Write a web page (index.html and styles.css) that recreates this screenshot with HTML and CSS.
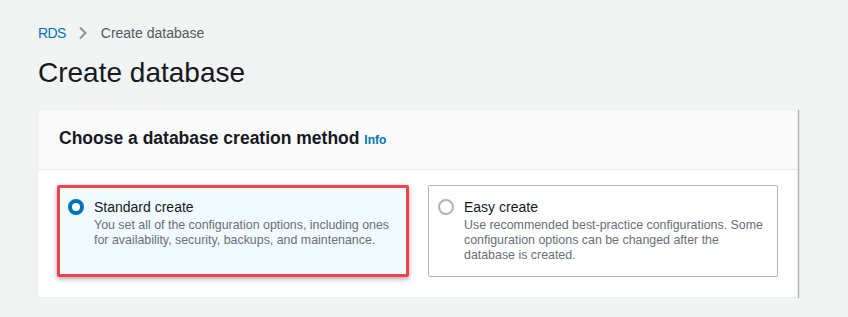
FILE: index.html
```html
<!DOCTYPE html>
<html lang="en">
<head>
    <meta charset="UTF-8">
    <title>Create database</title>
    <link rel="stylesheet" href="styles.css">
</head>
<body>
    <nav class="breadcrumbs">
        <a href="#" class="crumb-link">RDS</a>
        <svg class="crumb-sep" width="8" height="14" viewBox="0 0 8 14"><path d="M1 1.5 L6.5 7 L1 12.5" fill="none" stroke="#879596" stroke-width="2"/></svg>
        <span class="crumb-current">Create database</span>
    </nav>

    <h1 class="page-title">Create database</h1>

    <section class="panel">
        <div class="panel-header">
            <h2>Choose a database creation method <a href="#" class="info-link">Info</a></h2>
        </div>
        <div class="panel-body">
            <label class="tile selected">
                <span class="radio checked"></span>
                <span class="tile-text">
                    <span class="tile-title">Standard create</span>
                    <span class="tile-desc">You set all of the configuration options, including ones for availability, security, backups, and maintenance.</span>
                </span>
            </label>
            <label class="tile">
                <span class="radio"></span>
                <span class="tile-text">
                    <span class="tile-title">Easy create</span>
                    <span class="tile-desc">Use recommended best-practice configurations. Some configuration options can be changed after the database is created.</span>
                </span>
            </label>
        </div>
    </section>
</body>
</html>
```

FILE: styles.css
```css
* {
    margin: 0;
    padding: 0;
    box-sizing: border-box;
}

body {
    background: #f2f3f3;
    font-family: 'Liberation Sans', Arial, sans-serif;
    color: #16191f;
    padding: 24px 50px 0 37px;
}

.breadcrumbs {
    display: flex;
    align-items: center;
    font-size: 14px;
    padding-left: 1px;
    height: 18px;
}

.crumb-link {
    color: #0073bb;
    text-decoration: none;
    letter-spacing: -0.6px;
}

.crumb-sep {
    margin: 0 14px 0 13px;
}

.crumb-current {
    color: #545b64;
}

.page-title {
    font-size: 28px;
    font-weight: 400;
    margin-top: 14px;
    padding-left: 1px;
    line-height: 34px;
}

.panel {
    margin-top: 19px;
    background: #fff;
    border: 1px solid #eaeded;
    box-shadow: 1px 1px 1px rgba(0, 28, 36, 0.3);
}

.panel-header {
    background: #fafafa;
    border-bottom: 1px solid #eaeded;
    height: 60px;
    display: flex;
    align-items: center;
    padding-left: 21px;
    padding-bottom: 3px;
}

.panel-header h2 {
    font-size: 17.5px;
    font-weight: 700;
}

.info-link {
    color: #0073bb;
    font-size: 12px;
    text-decoration: none;
}

.panel-body {
    display: grid;
    grid-template-columns: 352px 1fr;
    gap: 19px;
    padding: 15px 19px 20px 19px;
}

.tile {
    display: flex;
    gap: 10px;
    border: 1px solid #aab7b8;
    border-radius: 2px;
    padding: 13px 12px 12px 9px;
    height: 92px;
}

.tile.selected {
    background: #f1faff;
    border: 3px solid #f2434b;
    box-shadow: 0 2px 5px rgba(0, 0, 0, 0.35);
    padding: 11px 8px 10px 8px;
}

.radio {
    width: 16px;
    height: 16px;
    border-radius: 50%;
    border: 2px solid #aab7b8;
    background: #fff;
    flex-shrink: 0;
}

.radio.checked {
    border: 4px solid #0073bb;
}

.tile-text {
    display: flex;
    flex-direction: column;
}

.tile-title {
    font-size: 14px;
    line-height: 16px;
}

.tile-desc {
    font-size: 12.4px;
    line-height: 15px;
    color: #687078;
    margin-top: 3px;
}
```
